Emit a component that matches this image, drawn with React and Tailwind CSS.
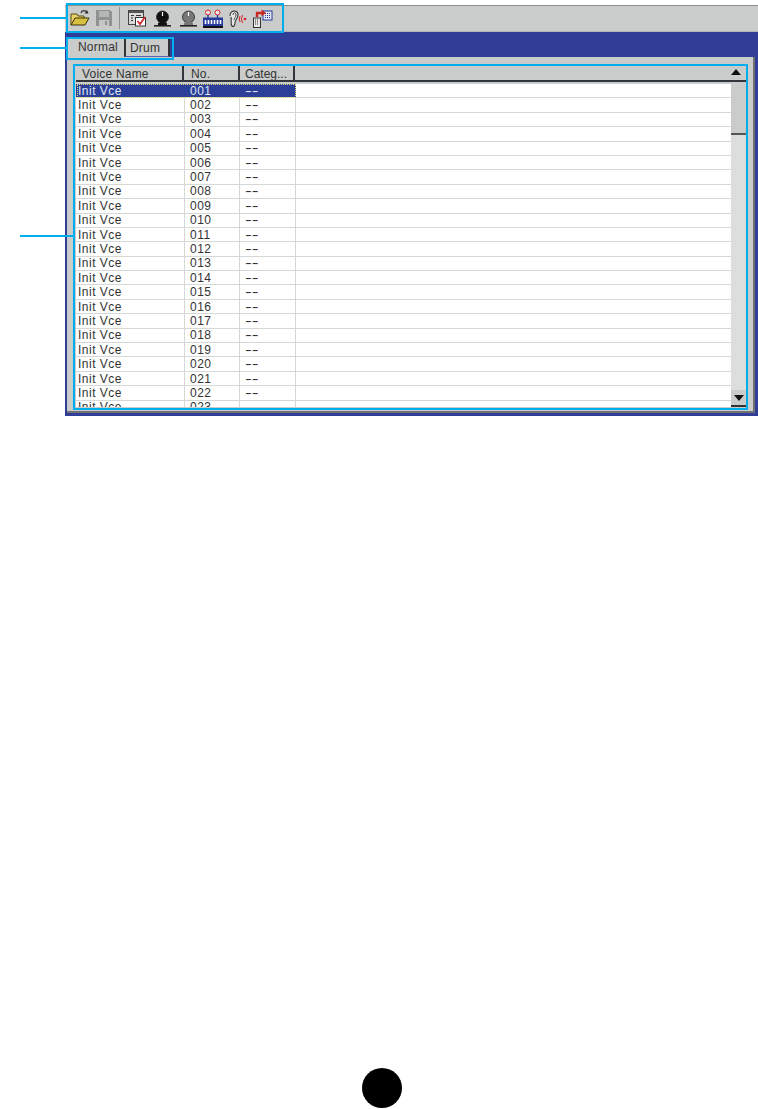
const F = () => (
  <svg width="20" height="18" viewBox="0 0 20 18">
    <path d="M11 4 C12 1 15 1 17 3" fill="none" stroke="#333" strokeWidth="1.3" />
    <path d="M17 1 L18.5 4.5 L14.5 4.5 Z" fill="#333" />
    <path d="M1 16 V5 H7 L8 7 H14 V9" fill="#e8d268" stroke="#5a4a10" strokeWidth="1" />
    <path d="M1 16 L5 9 H19 L15 16 Z" fill="#d8c040" stroke="#3a3008" strokeWidth="1" />
  </svg>
);
const Disk = () => (
  <svg width="16" height="16" viewBox="0 0 16 16">
    <path d="M0 0 H14 L16 2 V16 H0 Z" fill="#8f9291" />
    <rect x="3" y="1" width="10" height="6" fill="#b4b7b6" />
    <rect x="3" y="10" width="10" height="6" fill="#c4c7c6" />
    <rect x="9" y="11" width="2" height="4" fill="#8f9291" />
  </svg>
);
const Form = () => (
  <svg width="19" height="18" viewBox="0 0 19 18">
    <rect x="0.5" y="1.5" width="15" height="14" fill="#d8dad9" stroke="#444" />
    <rect x="1" y="2" width="14" height="2" fill="#555" />
    <path d="M3 6.5 H6 M8 6.5 H13 M3 9 H5 M3 11.5 H5" stroke="#333" strokeWidth="1" />
    <rect x="7.5" y="8.5" width="10" height="8.5" fill="#fff" stroke="#333" />
    <path d="M9.5 12 L12 15 L17 8" fill="none" stroke="#d8232a" strokeWidth="1.7" />
  </svg>
);
const Knob = ({ c }) => (
  <svg width="17" height="17" viewBox="0 0 17 17">
    <circle cx="8.5" cy="7" r="6" fill={c} stroke="#222" strokeWidth="0.8" />
    <path d="M8.5 2 V6" stroke="#fff" strokeWidth="1.2" />
    <path d="M4 13 Q8.5 10 13 13 L13 15 H4 Z" fill={c} />
    <rect x="0" y="15" width="17" height="1.6" fill="#222" />
  </svg>
);
const Keys = () => (
  <svg width="20" height="19" viewBox="0 0 20 19">
    <circle cx="5" cy="3.5" r="2.5" fill="#e8e8e8" stroke="#d8232a" strokeWidth="1" />
    <circle cx="14.5" cy="3.5" r="2.5" fill="#e8e8e8" stroke="#d8232a" strokeWidth="1" />
    <path d="M5 6 V9 M14.5 6 V9" stroke="#233a9a" strokeWidth="1.4" />
    <rect x="0" y="8.5" width="20" height="10" fill="#263a9e" />
    <path d="M2.5 11 V15 M5.5 11 V15 M8.5 11 V15 M11.5 11 V15 M14.5 11 V15 M17.5 11 V15" stroke="#fff" strokeWidth="1.6" />
    <rect x="0" y="17" width="20" height="2" fill="#111" />
  </svg>
);
const Ear = () => (
  <svg width="19" height="19" viewBox="0 0 19 19">
    <path d="M2 7 C2 1 10 0 10 6 C10 10 7 10 7 14 C7 17 5 18 4 17 C2 15 4 11 3 8" fill="#e8e8e8" stroke="#333" strokeWidth="1.1" />
    <path d="M5 6 C5 3 8 3 8 6 C8 8 6 9 6 11" fill="none" stroke="#333" strokeWidth="0.9" />
    <path d="M12 7 Q10.5 10 12 13 M14.5 6 Q12.5 10 14.5 14" fill="none" stroke="#d8232a" strokeWidth="1" />
    <circle cx="17" cy="10" r="1.3" fill="#d8232a" />
  </svg>
);
const Transfer = () => (
  <svg width="20" height="19" viewBox="0 0 20 19">
    <rect x="10" y="2" width="9" height="9" fill="#e8eaf4" stroke="#233a9a" />
    <path d="M12 4.5 H17 M12 6.5 H17 M12 8.5 H17" stroke="#233a9a" strokeDasharray="1 1" />
    <rect x="0.5" y="9" width="7" height="9.5" fill="#e8e8e8" stroke="#333" />
    <path d="M2 11 H6 M2 13 H6 M2 15 H6" stroke="#333" strokeDasharray="1 1" />
    <path d="M4 8 V4 H9" fill="none" stroke="#c8281e" strokeWidth="2.4" />
    <path d="M8.5 0.5 L13 4 L8.5 7.5 Z" fill="#c8281e" />
  </svg>
);

const rows = Array.from({ length: 23 }, (_, i) => String(i + 1).padStart(3, "0"));

export default function App() {
  return (
    <div
      className="relative w-[758px] h-[1109px] overflow-hidden bg-white text-[12px] leading-none tracking-[0.5px] text-[#333333]"
      style={{ fontFamily: '"Liberation Sans", Arial, sans-serif' }}
    >
      <div className="pl-[65px] pt-[5px]">
        <div className="h-[27px] border-t border-b border-t-[#8c8f8e] border-b-[#b4b7b5] bg-[#c9ccca] flex items-center pl-[5px] pb-[1px]">
          <div className="w-[26px]"><F /></div>
          <div className="w-[23px]"><Disk /></div>
          <div className="w-[9px] h-[22px] border-l border-[#8f9291]"></div>
          <div className="w-[26px]"><Form /></div>
          <div className="w-[26px]"><Knob c="#111" /></div>
          <div className="w-[23px]"><Knob c="#777" /></div>
          <div className="w-[25px]"><Keys /></div>
          <div className="w-[25px]"><Ear /></div>
          <div className="w-[20px]"><Transfer /></div>
        </div>
        <div className="w-[693px] h-[384px] bg-[#303e98] pt-[5px] pl-[2px] pr-[3px] pb-[3px] flex flex-col">
          <div className="h-[20px] flex items-stretch">
            <div className="w-[57px] bg-[#c9ccca] flex items-center pl-[11px] pb-[1px] tracking-[0.2px]">Normal</div>
            <div className="w-[46px] bg-[#c9ccca] border-l-2 border-r-2 border-b border-l-[#333] border-r-[#333] border-b-[#5563b0] flex items-center pl-[4px] pt-[3px] tracking-[0.2px]">Drum</div>
          </div>
          <div className="flex-1 bg-[#c9ccca] border-r-2 border-b-2 border-[#6f7271] pt-[9px] pl-[9px]">
            <div className="w-[670px] h-[16px] flex items-center border-b-2 border-[#33363a] tracking-[0.2px]">
              <div className="w-[108px] h-full border-r-2 border-[#33363a] pl-[6px] pt-[1px] flex items-center">Voice Name</div>
              <div className="w-[56px] h-full border-r-2 border-[#33363a] pl-[7px] pt-[1px] flex items-center">No.</div>
              <div className="w-[55px] h-full border-r-2 border-[#33363a] pl-[5px] pt-[1px] flex items-center tracking-[0px]">Categ...</div>
              <div className="flex-1"></div>
              <svg width="10" height="6" viewBox="0 0 10 6" className="mr-[5px] mb-[2px]"><path d="M5 0 L10 6 H0 Z" fill="#111" /></svg>
            </div>
            <div className="flex w-[670px] h-[326px] pt-[2px]">
              <div className="w-[655px] h-[323px] overflow-hidden bg-white">
                {rows.map((n, i) => {
                  const s = i === 0;
                  return (
                    <div key={n} className="h-[14.4px] flex items-center border-b border-[#d5d8d6]">
                      <div className={s ? "w-[109px] h-full pl-[2px] flex items-center bg-[#2c3f98] text-[#dfe3f4]" : "w-[109px] h-full pl-[2px] flex items-center border-r border-[#d5d8d6]"}>Init Vce</div>
                      <div className={s ? "w-[55px] h-full pl-[5px] flex items-center bg-[#2c3f98] text-[#dfe3f4]" : "w-[55px] h-full pl-[5px] flex items-center border-r border-[#d5d8d6]"}>{n}</div>
                      <div className={s ? "w-[56px] h-full pl-[5px] flex items-center bg-[#2c3f98] text-[#dfe3f4] tracking-[0px]" : "w-[56px] h-full pl-[5px] flex items-center border-r border-[#d5d8d6] tracking-[0px]"}>
                        <span className="inline-block origin-left scale-x-[1.7]">--</span>
                      </div>
                    </div>
                  );
                })}
              </div>
              <div className="w-[15px] h-[323px] bg-[#dcdedd] flex flex-col justify-between">
                <div className="h-[51px] bg-[#c9ccca] border-b-2 border-[#555]"></div>
                <div className="h-[17px] bg-[#c9ccca] border-b-2 border-[#333] flex items-center justify-center">
                  <svg width="10" height="6" viewBox="0 0 10 6"><path d="M0 0 H10 L5 6 Z" fill="#111" /></svg>
                </div>
              </div>
            </div>
          </div>
        </div>
      </div>

      {/* annotation boxes and leader lines */}
      <div className="absolute left-[66px] top-[3px] w-[218px] h-[30px] border-2 border-[#00aeef]"></div>
      <div className="absolute left-[66px] top-[37px] w-[108px] h-[23px] border-2 border-[#00aeef]"></div>
      <div className="absolute left-[73px] top-[64px] w-[675px] h-[346px] border-2 border-[#00aeef]"></div>
      <div className="absolute left-[20px] top-[17px] w-[46px] h-[2px] bg-[#00aeef]"></div>
      <div className="absolute left-[20px] top-[47px] w-[46px] h-[2px] bg-[#00aeef]"></div>
      <div className="absolute left-[20px] top-[235px] w-[53px] h-[2px] bg-[#00aeef]"></div>
      <div className="absolute left-[77px] top-[84px] w-[219px] h-[14px] border border-dotted border-[#e8e070]"></div>
      <div className="absolute left-[362px] top-[1068px] w-[40px] h-[40px] rounded-full bg-black"></div>
    </div>
  );
}
